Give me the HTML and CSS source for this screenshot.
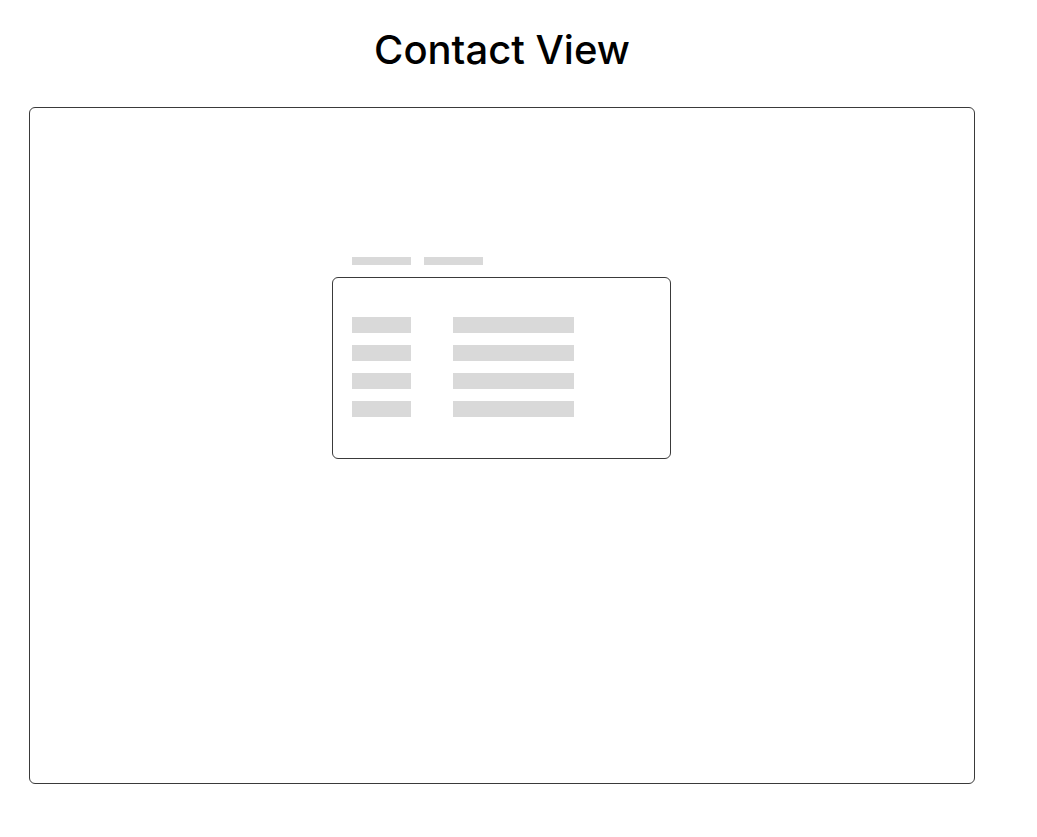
FILE: index.html
```html
<!DOCTYPE html>
<html>
<head>
<meta charset="utf-8">
<link rel="stylesheet" href="styles.css">
</head>
<body>
<div class="page">
  <h1 class="title">Contact View</h1>
  <div class="frame">
    <div class="widget">
      <div class="tabs">
        <span class="tab"></span>
        <span class="tab"></span>
      </div>
      <div class="card">
        <div class="row"><span class="label"></span><span class="value"></span></div>
        <div class="row"><span class="label"></span><span class="value"></span></div>
        <div class="row"><span class="label"></span><span class="value"></span></div>
        <div class="row"><span class="label"></span><span class="value"></span></div>
      </div>
    </div>
  </div>
</div>
</body>
</html>
```

FILE: styles.css
```css
html, body {
  margin: 0;
  padding: 0;
  background: #ffffff;
}
body {
  font-family: Inter, "Liberation Sans", sans-serif;
  color: #000;
}
.page {
  width: 946px;
  margin-left: 29px;
  padding-top: 26px;
}
.title {
  margin: 0;
  height: 81px;
  font-size: 40px;
  font-weight: 500;
  line-height: 48px;
  text-align: center;
}
.frame {
  box-sizing: border-box;
  width: 946px;
  height: 677px;
  border: 1px solid #3a3a3a;
  border-radius: 6px;
  padding: 149px 0 0 302px;
}
.widget {
  display: flex;
  flex-direction: column;
  gap: 12px;
}
.tabs {
  display: flex;
  gap: 13px;
  padding-left: 20px;
}
.tab {
  width: 59px;
  height: 8px;
  background: #d9d9d9;
}
.card {
  box-sizing: border-box;
  width: 339px;
  height: 182px;
  border: 1px solid #3a3a3a;
  border-radius: 6px;
  padding: 39px 0 0 19px;
  display: flex;
  flex-direction: column;
  gap: 12px;
}
.row {
  display: flex;
  gap: 42px;
}
.label {
  width: 59px;
  height: 16px;
  background: #d9d9d9;
}
.value {
  width: 121px;
  height: 16px;
  background: #d9d9d9;
}
```
